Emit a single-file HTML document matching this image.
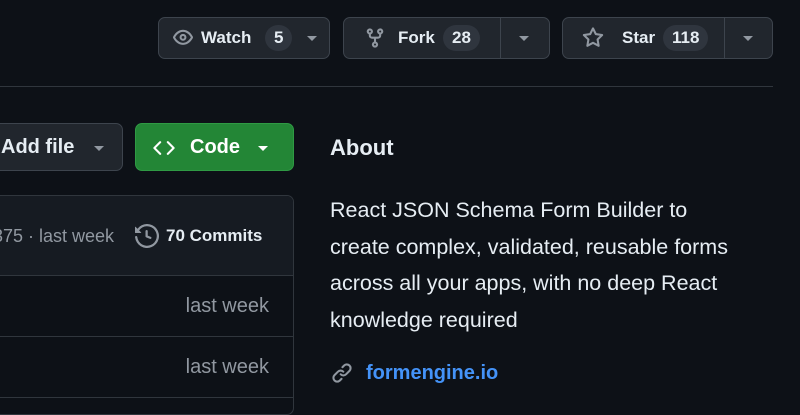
<!DOCTYPE html>
<html><head><style>
body{margin:0;width:800px;height:400px;background:#0d1117;overflow:hidden;position:relative;font-family:"Liberation Sans",sans-serif;color:#e6edf3}
.b{position:absolute;background:#21262d;border:1px solid #3d444d;border-radius:7px;box-sizing:border-box;height:42px;top:17px;font-size:17px;font-weight:bold;color:#e6edf3}
.b span{position:absolute;top:10px}
.cnt{position:absolute;top:7px;height:26px;line-height:26px;border-radius:13px;background:#2f353e;padding:0 9px;font-size:17px}
.dd{position:absolute;width:0;height:0;border-left:5px solid transparent;border-right:5px solid transparent;border-top:5px solid #9198a1;top:18px}
.div{position:absolute;top:0;bottom:0;width:1px;background:#3d444d}
</style></head><body>
<div class="b" style="left:158px;width:172px">
<svg style="position:absolute;left:13px;top:9px" width="22" height="22" viewBox="0 0 16 16" fill="#9198a1"><path d="M8 2c1.98 0 3.6.9 4.8 1.9C14 5 14.8 6.3 15.2 7.1c.1.3.1.5 0 .8C14.8 8.7 14 10 12.8 11.1 11.6 12.2 10 13 8 13s-3.6-.8-4.8-1.9C2 10 1.2 8.7.8 7.900a.9.9 0 0 1 0-.8C1.2 6.3 2 5 3.2 3.9 4.4 2.9 6 2 8 2Zm0 1.5c-1.5 0-2.8.7-3.8 1.6-.9.8-1.6 1.8-1.9 2.4.3.7 1 1.6 1.9 2.4 1 .9 2.3 1.6 3.8 1.6s2.8-.7 3.8-1.600c.9-.8 1.6-1.8 1.9-2.4-.3-.6-1-1.600-1.900-2.400-1-.9-2.300-1.600-3.800-1.600ZM8 5a2.5 2.5 0 1 1 0 5 2.5 2.5 0 0 1 0-5Zm0 1.5a1 1 0 1 0 0 2 1 1 0 0 0 0-2Z"/></svg>
<span style="left:42px">Watch</span><div class="cnt" style="left:106px">5</div><div class="dd" style="left:148px"></div></div>
<div class="b" style="left:343px;width:207px">
<svg style="position:absolute;left:20px;top:9px" width="22" height="22" viewBox="0 0 16 16" fill="#9198a1"><path d="M5 5.372v.878c0 .414.336.75.75.75h4.5a.75.75 0 0 0 .75-.75v-.878a2.25 2.25 0 1 1 1.5 0v.878a2.25 2.25 0 0 1-2.25 2.25h-1.5v2.128a2.251 2.251 0 1 1-1.5 0V8.5h-1.5A2.25 2.25 0 0 1 3.5 6.25v-.878a2.25 2.25 0 1 1 1.5 0ZM5 3.25a.75.75 0 1 0-1.5 0 .75.75 0 0 0 1.5 0Zm6.75.75a.75.75 0 1 0 0-1.5.75.75 0 0 0 0 1.5Zm-3 8.75a.75.75 0 1 0-1.5 0 .75.75 0 0 0 1.5 0Z"/></svg>
<span style="left:54px">Fork</span><div class="cnt" style="left:99px">28</div><div class="div" style="left:156px"></div><div class="dd" style="left:175px"></div></div>
<div class="b" style="left:562px;width:211px">
<svg style="position:absolute;left:19px;top:9px" width="22" height="22" viewBox="0 0 16 16" fill="#9198a1"><path d="M8 .25a.75.75 0 0 1 .673.418l1.882 3.815 4.21.612a.75.75 0 0 1 .416 1.279l-3.046 2.97.719 4.192a.75.75 0 0 1-1.088.791L8 12.347l-3.766 1.98a.75.75 0 0 1-1.088-.79l.72-4.194L.818 6.374a.75.75 0 0 1 .416-1.28l4.21-.611L7.327.668A.75.75 0 0 1 8 .25Zm0 2.445L6.615 5.5a.75.75 0 0 1-.564.41l-3.097.45 2.24 2.184a.75.75 0 0 1 .216.664l-.528 3.084 2.769-1.456a.75.75 0 0 1 .698 0l2.77 1.456-.53-3.084a.75.75 0 0 1 .216-.664l2.24-2.183-3.096-.45a.75.75 0 0 1-.564-.41L8 2.694Z"/></svg>
<span style="left:59px">Star</span><div class="cnt" style="left:100px">118</div><div class="div" style="left:161px"></div><div class="dd" style="left:180px"></div></div>
<div style="position:absolute;left:0;top:86px;width:773px;height:1px;background:#30363d"></div>
<div class="b" style="left:-20px;top:123px;width:143px;height:48px;font-size:20px"><span style="left:20px;top:12px">Add file</span><div class="dd" style="left:113px;top:22px"></div></div>
<div class="b" style="left:135px;top:123px;width:159px;height:48px;background:#238636;border-color:#2f9a44;font-size:20px;color:#fff">
<svg style="position:absolute;left:17px;top:13px" width="22" height="22" viewBox="0 0 16 16" fill="#fff"><path d="m11.28 3.22 4.25 4.25a.75.75 0 0 1 0 1.06l-4.25 4.25a.749.749 0 0 1-1.275-.326.749.749 0 0 1 .215-.734L13.94 8l-3.72-3.72a.749.749 0 0 1 .326-1.275.749.749 0 0 1 .734.215Zm-6.56 0a.751.751 0 0 1 1.042.018.751.751 0 0 1 .018 1.042L2.06 8l3.72 3.72a.749.749 0 0 1-.326 1.275.749.749 0 0 1-.734-.215L.47 8.53a.75.75 0 0 1 0-1.06Z"/></svg>
<span style="left:54px;top:12px">Code</span><div class="dd" style="left:122px;top:22px;border-top-color:#fff"></div></div>
<div style="position:absolute;left:-10px;top:195px;width:304px;height:220px;border:1px solid #30363d;border-radius:7px;box-sizing:border-box;overflow:hidden">
<div style="height:79px;background:#161b22;border-bottom:1px solid #30363d;position:relative">
<div style="position:absolute;left:2px;top:30px;font-size:18px;color:#9198a1">375 · last week</div>
<svg style="position:absolute;left:144px;top:28px" width="24" height="24" viewBox="0 0 16 16" fill="#9198a1"><path d="m.427 1.927 1.215 1.215a8.002 8.002 0 1 1-1.6 5.685.75.75 0 1 1 1.493-.154 6.5 6.5 0 1 0 1.18-4.458l1.358 1.358A.25.25 0 0 1 3.896 6H.25A.25.25 0 0 1 0 5.750V2.104a.25.25 0 0 1 .427-.177ZM7.75 4a.75.75 0 0 1 .75.75v2.992l2.028.812a.75.75 0 0 1-.557 1.392l-2.5-1A.751.751 0 0 1 7 8.25v-3.5A.75.75 0 0 1 7.75 4Z"/></svg>
<div style="position:absolute;left:175px;top:30px;font-size:17px;font-weight:bold">70 Commits</div></div>
<div style="height:60px;border-bottom:1px solid #30363d;position:relative"><div style="position:absolute;right:24px;top:19px;font-size:20px;color:#9198a1">last week</div></div>
<div style="height:60px;border-bottom:1px solid #30363d;position:relative"><div style="position:absolute;right:24px;top:19px;font-size:20px;color:#9198a1">last week</div></div>
</div>
<div style="position:absolute;left:330px;top:135px;font-size:22px;font-weight:bold">About</div>
<div style="position:absolute;left:330px;top:192px;width:470px;font-size:21.5px;line-height:36.5px;white-space:nowrap">React JSON Schema Form Builder to<br>create complex, validated, reusable forms<br>across all your apps, with no deep React<br>knowledge required</div>
<svg style="position:absolute;left:331px;top:362px" width="22" height="22" viewBox="0 0 16 16" fill="#9198a1"><path d="m7.775 3.275 1.25-1.25a3.5 3.5 0 1 1 4.95 4.950l-2.5 2.5a3.5 3.5 0 0 1-4.950 0 .751.751 0 0 1 .018-1.042.751.751 0 0 1 1.042-.018 1.998 1.998 0 0 0 2.830 0l2.5-2.5a2.002 2.002 0 0 0-2.830-2.830l-1.250 1.250a.751.751 0 0 1-1.042-.018.751.751 0 0 1-.018-1.042Zm-4.690 9.640a1.998 1.998 0 0 0 2.830 0l1.250-1.250a.751.751 0 0 1 1.042.018.751.751 0 0 1 .018 1.042l-1.250 1.250a3.5 3.5 0 1 1-4.950-4.950l2.5-2.5a3.5 3.5 0 0 1 4.950 0 .751.751 0 0 1-.018 1.042.751.751 0 0 1-1.042.018 1.998 1.998 0 0 0-2.830 0l-2.5 2.5a1.998 1.998 0 0 0 0 2.830Z"/></svg>
<div style="position:absolute;left:366px;top:362px;font-size:20px;font-weight:bold;color:#4493f8">formengine.io</div>
</body></html>
